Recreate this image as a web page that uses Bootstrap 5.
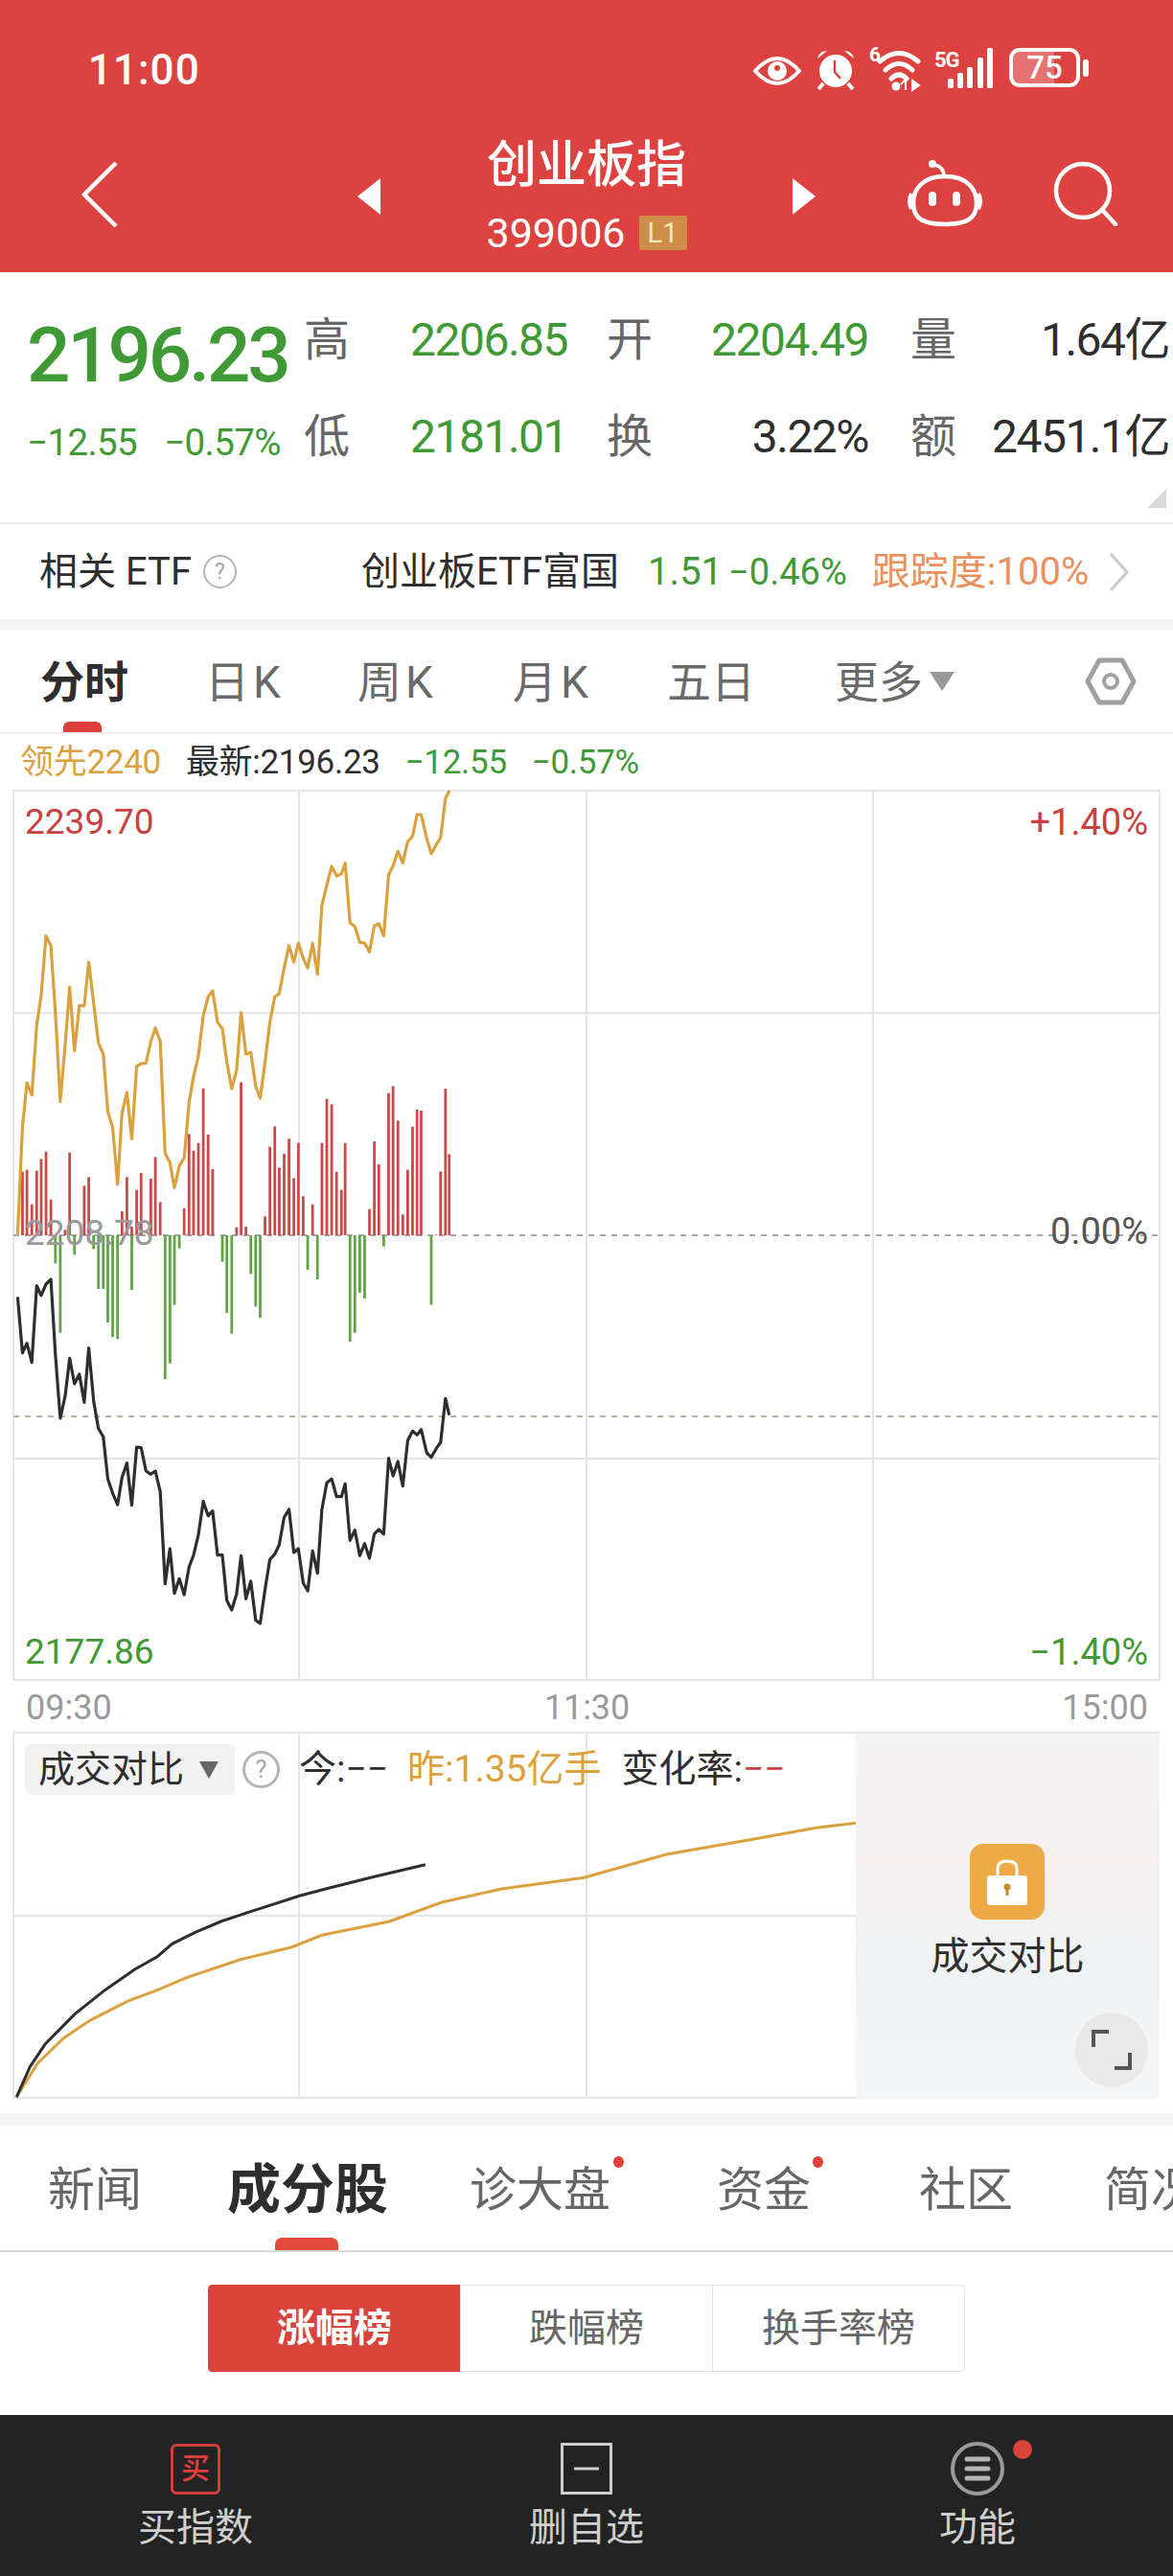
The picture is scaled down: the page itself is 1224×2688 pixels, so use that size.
<!DOCTYPE html>
<html lang="zh-CN">
<head>
    <meta charset="UTF-8">
    <meta name="viewport" content="width=device-width, initial-scale=1.0">
    <title>创业板指</title>
    <link href="https://cdn.jsdelivr.net/npm/bootstrap@5.3.0/dist/css/bootstrap.min.css" rel="stylesheet">
    <script src="https://cdn.jsdelivr.net/npm/bootstrap@5.3.0/dist/js/bootstrap.bundle.min.js"></script>
    <style>
        html, body { width: 1224px; height: 2688px; overflow: hidden; background: #fff; }
        body { font-family: Roboto, "Noto Sans CJK SC", sans-serif; color: #2e2e2e; position: relative; }
        .c-green { color: #3f9a35; }
        .c-red { color: #c8403f; }
        .c-gold { color: #dca13f; }
        .c-gray { color: #6f6f6f; }

        /* 顶部红色区域 */
        .top-head { height: 284px; background: #dc4340; color: #fff; }
        .status-row { height: 100px; padding: 51px 0 0 92px; }
        .clock { font-size: 44px; line-height: 44px; letter-spacing: 1px; font-weight: 500; width: 694px; }
        .stat-text { font-size: 19px; line-height: 19px; font-weight: 700; }
        .batt { width: 74px; height: 41px; border: 4px solid #fff; border-radius: 11px; font-size: 33px; line-height: 33px; font-weight: 500; text-align: center; background: linear-gradient(90deg, rgba(255,255,255,.25) 65%, transparent 65%); }
        .nav-row { height: 184px; }
        .nav-back { width: 373px; padding-left: 85px; }
        .title-box { width: 478px; }
        .title-main { font-size: 52px; line-height: 60px; margin-top: 43px; font-weight: 500; }
        .title-code { font-size: 43px; line-height: 46px; margin-top: 17px; }
        .l-one { background: #cf8d4a; color: #ffe9bd; font-size: 29px; line-height: 36px; width: 50px; text-align: center; margin-left: 14px; border-radius: 2px; }

        /* 报价 */
        .quote-box { height: 261px; position: relative; }
        .quote-left { width: 317px; padding: 45px 0 0 28px; }
        .big-price { font-size: 80px; line-height: 84px; font-weight: 500; letter-spacing: -3.2px; }
        .price-sub { font-size: 38.5px; line-height: 44px; margin-top: 27px; letter-spacing: -.6px; column-gap: 28px; }
        .quote-grid { display: grid; grid-template-columns: 316px 317px 274px; grid-auto-rows: 101px; padding-top: 20px; }
        .q-cell { display: flex; align-items: center; }
        .q-cell b { font-weight: 400; font-size: 48px; line-height: 56px; color: #666; }
        .q-cell span { font-size: 48px; line-height: 56px; margin-left: auto; letter-spacing: -1.5px; }
        .pr-a { padding-right: 41px; }
        .pr-b { padding-right: 44px; }
        .pr-c { padding-right: 4px; }
        .corner { position: absolute; right: 7px; top: 226px; width: 0; height: 0; border-left: 20px solid transparent; border-bottom: 20px solid #d9d9d9; }

        /* ETF */
        .etf-row { height: 101px; border-top: 2px solid #ececec; font-size: 40px; line-height: 50px; }
        .etf-name { width: 156px; margin-left: 41px; white-space: nowrap; }
        .tip-dot { border: 2px solid #b5b5b5; color: #a5a5a5; border-radius: 50%; width: 35px; height: 35px; font-size: 23px; line-height: 31px; text-align: center; flex: none; }
        .gap-band { height: 11px; background: #f5f5f5; }
        .gap-band-b { height: 13px; background: #f5f5f5; }

        /* K线页签 */
        .k-tabs { height: 109px; border-bottom: 2px solid #ececec; position: relative; font-size: 46px; color: #6a6a6a; }
        .k-tab { position: absolute; top: 28px; line-height: 54px; white-space: nowrap; }
        .k-tab i { font-style: normal; margin-left: 4px; }
        .k-on { font-weight: 700; color: #2e2e2e; font-size: 46px; }
        .k-bar { position: absolute; left: 66px; bottom: 0; width: 40px; height: 11px; background: #dc3f3c; border-radius: 6px 6px 0 0; }

        /* 分时图 */
        .legend-row { height: 58px; font-size: 35px; line-height: 40px; padding: 10px 0 0 21px; gap: 26px; letter-spacing: -.3px; }
        .chart-main { height: 930px; position: relative; }
        .chart-main > svg, .chart-sub > svg { position: absolute; left: 0; top: 0; }
        .axis-tag { position: absolute; font-size: 37px; line-height: 40px; }
        .axis-wide { font-size: 38px; }
        .axis-row { height: 53px; padding: 8px 26px 0 27px; font-size: 36px; line-height: 40px; color: #9a9a9a; }
        .chart-sub { height: 383px; position: relative; }
        .sub-head { position: absolute; left: 26px; top: 13px; height: 53px; font-size: 39px; line-height: 53px; white-space: nowrap; }
        .sub-pick { background: #f2f2f2; border-radius: 6px; width: 219px; padding-left: 14px; font-size: 38px; }
        .lock-panel { position: absolute; left: 893px; top: 2px; width: 317px; height: 381px; background: linear-gradient(180deg, #f5f4f5 0%, #f6f0f1 35%, #eff2f3 62%, #f5f6f7 100%); text-align: center; }
        .lock-icon { position: absolute; left: 119px; top: 115px; width: 78px; height: 79px; border-radius: 14px; background: #eeaa47; }
        .lock-text { position: absolute; left: 0; right: 0; top: 208px; font-size: 40px; line-height: 50px; }
        .zoom-btn { position: absolute; left: 229px; top: 291px; width: 76px; height: 78px; border-radius: 50%; background: #e9e9e9; }

        /* 资讯页签 */
        .news-tabs { height: 132px; border-bottom: 2px solid #d9d9d9; position: relative; overflow: hidden; font-size: 49px; color: #666; }
        .n-tab { position: absolute; top: 38px; line-height: 60px; white-space: nowrap; }
        .n-on { font-weight: 700; font-size: 56px; color: #2e2e2e; top: 37px; }
        .n-dot { position: absolute; top: 32px; width: 11px; height: 12px; border-radius: 50%; background: #dc3f3c; }
        .n-bar { position: absolute; left: 287px; bottom: 0; width: 66px; height: 13px; background: #e34a3b; border-radius: 7px 7px 0 0; }

        .rank-area { height: 170px; padding-top: 34px; }
        .rank-group { width: 790px; height: 91px; }
        .rank-group .btn { width: 264px; font-size: 40px; line-height: 50px; color: #666; background: #fff; border: 1px solid #e3e3e3; border-radius: 4px; padding: 0; }
        .rank-group .btn.rank-on { background: #d8433c; color: #fff; border-color: #d8433c; font-weight: 700; }

        /* 底栏 */
        .foot-bar { height: 168px; background: #232323; color: #cfcfcf; font-size: 40px; line-height: 48px; }
        .foot-item { width: 408px; padding-top: 28px; position: relative; text-align: center; }
        .foot-icon { height: 56px; margin-bottom: 10px; display: flex; justify-content: center; align-items: center; }
        .buy-box { width: 52px; height: 53px; border: 3px solid #d23f3d; border-radius: 6px; color: #e2403f; font-size: 30px; line-height: 46px; font-weight: 500; }
        .foot-dot { position: absolute; left: 241px; top: 26px; width: 20px; height: 20px; border-radius: 50%; background: #d8433c; }
    </style>
</head>
<body>
    <div class="top-head">
        <div class="status-row d-flex">
            <div class="clock">11:00</div>
            <div class="d-flex align-items-start" style="margin-top:-1px">
                <svg width="50" height="44" viewBox="0 0 50 44" class="mt-1"><path d="M2 20 Q25 -6 48 20 Q25 46 2 20Z" fill="none" stroke="#fff" stroke-width="4"/><circle cx="25" cy="20" r="10" fill="#fff"/><circle cx="25" cy="17" r="3" fill="#dc4340"/></svg>
                <svg width="42" height="46" viewBox="0 0 42 46" style="margin-left:15px"><circle cx="21" cy="24" r="17" fill="#fff"/><path d="M2 11 Q4 3 12 3Z M40 11 Q38 3 30 3Z" fill="#fff"/><path d="M8 37 L3 43 M34 37 L39 43" stroke="#fff" stroke-width="4"/><path d="M20 13 V25 L26 32" fill="none" stroke="#dc4340" stroke-width="2.5"/></svg>
                <div class="position-relative" style="width:54px;height:46px;margin-left:14px">
                    <span class="stat-text position-absolute" style="left:0;top:-2px;font-size:21px">6</span>
                    <svg width="54" height="46" viewBox="0 0 54 46"><path d="M11 14 Q31 -3 51 14 M17 23 Q31 10 45 23 M23 32 Q31 24 39 32" fill="none" stroke="#fff" stroke-width="5" stroke-linecap="round"/><circle cx="28" cy="40" r="4.5" fill="#fff"/><path d="M38 34 V44 M33 38 L38 33 M45 34 V44 L52 39Z" fill="#fff" stroke="#fff" stroke-width="2"/></svg>
                </div>
                <div class="position-relative" style="width:62px;height:44px;margin-left:14px">
                    <span class="stat-text position-absolute" style="left:0;top:3px;font-size:22px;letter-spacing:-1px">5G</span>
                    <svg width="62" height="44" viewBox="0 0 62 44"><rect x="14" y="32" width="6" height="10" rx="2" fill="#fff"/><rect x="24" y="26" width="6" height="16" rx="2" fill="#fff"/><rect x="34" y="20" width="6" height="22" rx="2" fill="#fff"/><rect x="45" y="10" width="6" height="32" rx="2" fill="#fff"/><rect x="55" y="0" width="6" height="42" rx="2" fill="#fff"/></svg>
                </div>
                <div class="batt d-flex align-items-center justify-content-center" style="margin-left:16px">75</div>
                <svg width="8" height="18" viewBox="0 0 8 18" style="margin:12px 0 0 3px"><rect width="6" height="18" rx="3" fill="#fff"/></svg>
            </div>
        </div>
        <div class="nav-row d-flex">
            <div class="nav-back" style="padding-top:68px">
                <svg width="38" height="70" viewBox="0 0 38 70"><path d="M36 2 L3 35 L36 68" fill="none" stroke="#fff" stroke-width="4.5"/></svg>
            </div>
            <div class="title-box d-flex">
                <svg width="24" height="38" viewBox="0 0 24 38" style="margin-top:86px"><path d="M24 0 V38 L0 19Z" fill="#fff"/></svg>
                <div class="flex-grow-1 text-center">
                    <div class="title-main">创业板指</div>
                    <div class="title-code d-flex align-items-center justify-content-center">399006<span class="l-one">L1</span></div>
                </div>
                <svg width="24" height="38" viewBox="0 0 24 38" style="margin-top:86px"><path d="M0 0 V38 L24 19Z" fill="#fff"/></svg>
            </div>
            <div style="padding:66px 0 0 96px">
                <svg width="78" height="72" viewBox="0 0 78 72"><circle cx="26" cy="5" r="4" fill="#fff"/><path d="M28 6 Q38 8 38 18" fill="none" stroke="#fff" stroke-width="3.5"/><path d="M39 18 C15 18 6 32 6 46 C6 62 16 68 39 68 C62 68 72 62 72 46 C72 32 63 18 39 18Z" fill="none" stroke="#fff" stroke-width="4.5"/><path d="M4 36 Q0 44 4 52 M74 36 Q78 44 74 52" fill="none" stroke="#fff" stroke-width="4"/><rect x="22" y="34" width="8" height="15" rx="4" fill="#fff"/><rect x="47" y="34" width="8" height="15" rx="4" fill="#fff"/></svg>
            </div>
            <div style="padding:68px 0 0 74px">
                <svg width="68" height="68" viewBox="0 0 68 68"><circle cx="31" cy="31" r="28" fill="none" stroke="#fff" stroke-width="4.5"/><path d="M52 52 L65 66" stroke="#fff" stroke-width="4.5" stroke-linecap="round"/></svg>
            </div>
        </div>
    </div>

    <div class="quote-box d-flex">
        <div class="quote-left">
            <div class="big-price c-green">2196.23</div>
            <div class="price-sub c-green d-flex"><span>−12.55</span><span>−0.57%</span></div>
        </div>
        <div class="quote-grid">
            <div class="q-cell pr-a"><b>高</b><span class="c-green">2206.85</span></div>
            <div class="q-cell pr-b"><b>开</b><span class="c-green">2204.49</span></div>
            <div class="q-cell pr-c"><b>量</b><span>1.64亿</span></div>
            <div class="q-cell pr-a"><b>低</b><span class="c-green">2181.01</span></div>
            <div class="q-cell pr-b"><b>换</b><span>3.22%</span></div>
            <div class="q-cell pr-c"><b>额</b><span>2451.1亿</span></div>
        </div>
        <div class="corner"></div>
    </div>

    <div class="etf-row d-flex align-items-center">
        <div class="etf-name">相关 ETF</div>
        <div class="tip-dot" style="margin-left:15px">?</div>
        <div style="margin-left:130px;white-space:nowrap">创业板ETF富国</div>
        <div class="c-green" style="margin-left:30px">1.51</div>
        <div class="c-green" style="margin-left:6px;font-size:38px">−0.46%</div>
        <div style="margin-left:26px;color:#e8915f;white-space:nowrap">跟踪度:100%</div>
        <svg width="24" height="44" viewBox="0 0 24 44" style="margin-left:20px"><path d="M3 3 L20 22 L3 41" fill="none" stroke="#c9c9c9" stroke-width="3"/></svg>
    </div>
    <div class="gap-band"></div>

    <div class="k-tabs">
        <div class="k-tab k-on" style="left:42px">分时</div>
        <div class="k-tab" style="left:214px">日<i>K</i></div>
        <div class="k-tab" style="left:373px">周<i>K</i></div>
        <div class="k-tab" style="left:535px">月<i>K</i></div>
        <div class="k-tab" style="left:696px">五日</div>
        <div class="k-tab" style="left:871px">更多</div>
        <svg class="position-absolute" style="left:970px;top:44px" width="26" height="20" viewBox="0 0 26 20"><path d="M0 0 H26 L13 20Z" fill="#9a9a9a"/></svg>
        <svg class="position-absolute" style="left:1132px;top:29px" width="54" height="50" viewBox="0 0 54 50"><path d="M15 3 H39 L51 25 L39 47 H15 L3 25Z" fill="none" stroke="#a0a0a0" stroke-width="5" stroke-linejoin="round"/><circle cx="27" cy="25" r="7" fill="none" stroke="#a0a0a0" stroke-width="4"/></svg>
        <div class="k-bar"></div>
    </div>

    <div class="legend-row d-flex">
        <div class="c-gold">领先2240</div>
        <div>最新:2196.23</div>
        <div class="c-green">−12.55</div>
        <div class="c-green">−0.57%</div>
    </div>

    <div class="chart-main">
        <svg id="mainChart" width="1224" height="930" viewBox="0 824 1224 930"></svg>
        <div class="axis-tag c-red" style="left:26px;top:14px">2239.70</div>
        <div class="axis-tag axis-wide c-red" style="right:26px;top:14px">+1.40%</div>
        <div class="axis-tag" style="left:26px;top:443px;color:#9a9a9a">2208.78</div>
        <div class="axis-tag axis-wide" style="right:26px;top:441px;color:#555">0.00%</div>
        <div class="axis-tag c-green" style="left:26px;top:880px">2177.86</div>
        <div class="axis-tag axis-wide c-green" style="right:26px;top:880px">−1.40%</div>
    </div>

    <div class="axis-row d-flex justify-content-between">
        <span>09:30</span><span>11:30</span><span>15:00</span>
    </div>

    <div class="chart-sub">
        <svg id="subChart" width="1224" height="383" viewBox="0 1807 1224 383"></svg>
        <div class="sub-head d-flex align-items-center">
            <div class="sub-pick d-flex align-items-center">成交对比<svg class="ms-3" width="20" height="18" viewBox="0 0 20 18"><path d="M0 0 H20 L10 18Z" fill="#666"/></svg></div>
            <div class="tip-dot" style="margin-left:8px;width:39px;height:39px;line-height:33px;font-size:25px;border-width:3px">?</div>
            <div style="margin-left:20px">今:−−</div>
            <div class="c-gold" style="margin-left:20px">昨:1.35亿手</div>
            <div style="margin-left:21px">变化率:<span class="c-red">−−</span></div>
        </div>
        <div class="lock-panel">
            <div class="lock-icon d-flex align-items-center justify-content-center">
                <svg width="44" height="50" viewBox="0 0 44 50"><path d="M12 22 V11 Q12 3 22 3 Q32 3 32 11 V22" fill="none" stroke="#fff" stroke-width="3"/><rect x="1" y="18" width="42" height="31" rx="3" fill="#fff"/><circle cx="22" cy="30" r="3.5" fill="#c9892f"/><rect x="20.5" y="31" width="3" height="8" fill="#c9892f"/></svg>
            </div>
            <div class="lock-text">成交对比</div>
            <div class="zoom-btn d-flex align-items-center justify-content-center">
                <svg width="42" height="42" viewBox="0 0 42 42"><path d="M2 18 V2 H18 M40 24 V40 H24" fill="none" stroke="#555" stroke-width="4"/></svg>
            </div>
        </div>
    </div>

    <div style="height:15px"></div>
    <div class="gap-band-b"></div>

    <div class="news-tabs">
        <div class="n-tab" style="left:50px">新闻</div>
        <div class="n-tab n-on" style="left:237px">成分股</div>
        <div class="n-tab" style="left:490px">诊大盘</div>
        <div class="n-dot" style="left:640px"></div>
        <div class="n-tab" style="left:748px">资金</div>
        <div class="n-dot" style="left:848px"></div>
        <div class="n-tab" style="left:959px">社区</div>
        <div class="n-tab" style="left:1152px">简况</div>
        <div class="n-bar"></div>
    </div>

    <div class="rank-area d-flex justify-content-center">
        <div class="btn-group rank-group" role="group">
            <button type="button" class="btn rank-on">涨幅榜</button>
            <button type="button" class="btn">跌幅榜</button>
            <button type="button" class="btn">换手率榜</button>
        </div>
    </div>

    <div class="foot-bar d-flex">
        <div class="foot-item">
            <div class="foot-icon"><div class="buy-box">买</div></div>
            <div>买指数</div>
        </div>
        <div class="foot-item">
            <div class="foot-icon"><svg width="54" height="54" viewBox="0 0 54 54"><rect x="1.5" y="1.5" width="51" height="51" fill="none" stroke="#cfcfcf" stroke-width="3"/><path d="M14 27 H40" stroke="#cfcfcf" stroke-width="3"/></svg></div>
            <div>删自选</div>
        </div>
        <div class="foot-item">
            <div class="foot-icon"><svg width="56" height="56" viewBox="0 0 56 56"><circle cx="28" cy="28" r="26" fill="none" stroke="#9a9a9a" stroke-width="4"/><path d="M17 18 H39 M17 28 H39 M17 38 H39" stroke="#b5b5b5" stroke-width="5" stroke-linecap="round"/></svg></div>
            <div>功能</div>
            <div class="foot-dot"></div>
        </div>
    </div>

    <script>
        const NS = "http://www.w3.org/2000/svg";

        // 行情数据，x 为序号位置，y 为放大图上读到的坐标
        const xs = [47,60,72,85,98,110,123,136,148,161,174,186,199,212,225,237,250,263,276,288,301,314,326,339,352,365,377,390,403,415,428,441,454,466,479,492,505,517,530,543,556,568,581,594,606,619,632,644,657,670,683,695,708,721,734,746,759,772,785,797,810,822,835,848,860,873,886,899,912,922,935,948,961,974,987,1000,1012,1025,1038,1050,1063,1076,1089,1102,1114,1125,1140,1152,1165,1177,1190,1200];
        const goldY = [1525,1190,1050,1088,870,775,590,620,830,1108,930,750,950,808,808,672,800,925,960,1140,1190,1368,1145,1080,1225,998,990,988,920,878,920,1270,1300,1378,1310,1285,1110,1030,965,840,780,762,860,880,985,1068,1010,830,960,955,1060,1098,985,860,780,770,690,620,672,612,660,690,612,710,495,430,372,402,395,362,548,560,610,612,640,558,552,590,400,370,325,362,295,278,210,210,285,332,305,282,160,135];
        const darkY = [160,335,305,365,125,155,120,105,340,540,470,352,432,402,490,320,485,572,598,730,775,810,725,680,812,630,632,705,715,705,770,1058,948,1088,1042,1092,1005,968,905,800,845,830,968,968,1110,1140,1090,970,1105,1050,1172,1182,1075,982,965,935,850,825,960,948,1055,1080,955,1025,825,742,730,785,785,745,922,890,970,932,978,902,888,902,665,720,675,752,610,580,592,575,648,662,635,615,478,530];
        const redBars = [[60,1328],[72,1322],[85,1430],[98,1325],[110,1288],[123,1265],[136,1415],[174,1510],[186,1268],[225,1372],[237,1345],[326,1452],[339,1345],[352,1500],[365,1385],[377,1332],[403,1350],[415,1282],[428,1423],[492,1442],[505,1210],[517,1262],[530,1238],[543,1067],[556,1212],[568,1320],[632,1502],[644,1048],[657,1500],[708,1468],[721,1250],[734,1186],[746,1315],[759,1272],[772,1225],[785,1348],[797,1238],[810,1405],[835,1430],[860,1238],[873,1100],[886,1117],[899,1328],[912,1385],[922,1238],[987,1445],[1000,1233],[1012,1305],[1038,1082],[1050,1060],[1063,1168],[1076,1462],[1089,1322],[1102,1187],[1114,1133],[1125,1137],[1165,1525],[1177,1327],[1190,1068],[1200,1273]];
        const greenBars = [[148,55],[161,272],[199,28],[250,10],[263,135],[276,135],[288,240],[301,285],[314,292],[352,138],[441,417],[454,368],[466,185],[479,8],[594,50],[606,210],[619,275],[670,88],[683,190],[695,225],[822,75],[848,105],[935,300],[948,272],[961,147],[974,165],[1025,2],[1152,185]];
        const subDark = [[22,1225],[40,1130],[60,1060],[100,965],[140,890],[180,825],[210,785],[230,745],[260,710],[295,675],[340,640],[400,595],[440,570],[500,535],[568,497]];
        const subGold = [[22,1225],[50,1120],[85,1040],[120,985],[170,925],[210,890],[250,850],[320,795],[390,755],[430,718],[520,675],[590,615],[670,573],[780,538],[830,505],[890,465],[1000,420],[1090,382],[1144,367]];

        const zeroY = 1289;

        function addEl(svg, tag, attrs) {
            const el = document.createElementNS(NS, tag);
            Object.keys(attrs).forEach(k => el.setAttribute(k, attrs[k]));
            svg.appendChild(el);
        }
        function gridLine(svg, x1, y1, x2, y2, color, extra) {
            addEl(svg, "line", Object.assign({x1, y1, x2, y2, stroke: color, "stroke-width": 2}, extra || {}));
        }

        const main = document.getElementById("mainChart");
        addEl(main, "rect", {x: 14, y: 825, width: 1196, height: 928, fill: "none", stroke: "#e6e6e6", "stroke-width": 2});
        [312, 612, 911].forEach(x => gridLine(main, x, 825, x, 1753, "#e6e6e6"));
        [1057, 1522].forEach(y => gridLine(main, 14, y, 1210, y, "#e6e6e6"));
        gridLine(main, 14, zeroY, 1210, zeroY, "#a8a8a8", {"stroke-dasharray": "6 6"});
        gridLine(main, 14, 1478, 1210, 1478, "#b5b59e", {"stroke-dasharray": "6 6"});

        redBars.forEach(b => {
            const x = b[0] / 2.56, top = 780 + b[1] / 3;
            addEl(main, "rect", {x: x - 1.4, y: top, width: 2.8, height: zeroY - top, fill: "#c94a48"});
        });
        greenBars.forEach(b => {
            const x = b[0] / 2.56, bottom = 1300 + b[1] / 3;
            addEl(main, "rect", {x: x - 1.4, y: zeroY, width: 2.8, height: bottom - zeroY, fill: "#5fa545"});
        });
        addEl(main, "polyline", {points: xs.map((x, i) => (x / 2.56).toFixed(1) + "," + (780 + goldY[i] / 3).toFixed(1)).join(" "), fill: "none", stroke: "#dca13f", "stroke-width": 3.2, "stroke-linejoin": "round"});
        addEl(main, "polyline", {points: xs.map((x, i) => (x / 2.56).toFixed(1) + "," + (1300 + darkY[i] / 3).toFixed(1)).join(" "), fill: "none", stroke: "#2e2e2e", "stroke-width": 3.2, "stroke-linejoin": "round"});

        const sub = document.getElementById("subChart");
        gridLine(sub, 14, 1808, 1210, 1808, "#e6e6e6");
        gridLine(sub, 14, 2189, 893, 2189, "#e6e6e6");
        gridLine(sub, 14, 1808, 14, 2189, "#e6e6e6");
        [312, 612].forEach(x => gridLine(sub, x, 1808, x, 2189, "#e6e6e6"));
        gridLine(sub, 14, 1999, 893, 1999, "#e6e6e6");
        const subPts = arr => arr.map(p => (p[0] / 1.28).toFixed(1) + "," + (1780 + p[1] / 3).toFixed(1)).join(" ");
        addEl(sub, "polyline", {points: subPts(subGold), fill: "none", stroke: "#dca13f", "stroke-width": 3});
        addEl(sub, "polyline", {points: subPts(subDark), fill: "none", stroke: "#2e2e2e", "stroke-width": 3});
    </script>
</body>
</html>
